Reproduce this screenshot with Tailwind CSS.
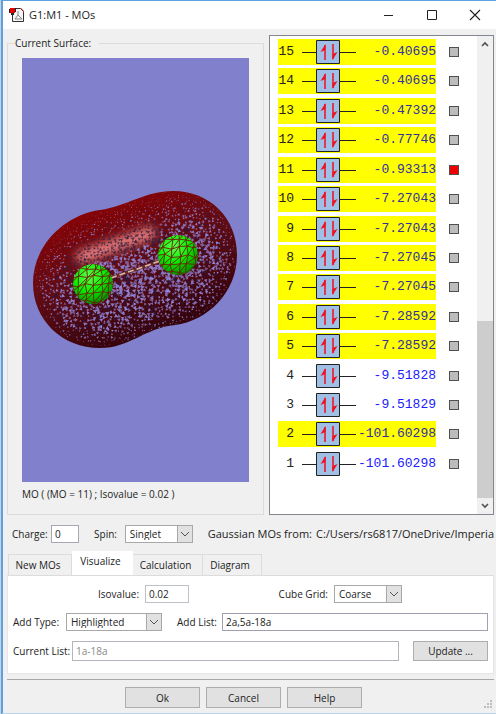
<!DOCTYPE html>
<html lang="en">
<head>
    <meta charset="UTF-8">
    <meta name="viewport" content="width=device-width, initial-scale=1.0">
    <title>G1:M1 - MOs</title>
    <script src="https://cdn.jsdelivr.net/npm/@tailwindcss/browser@4"></script>
</head>
<body class="min-h-screen bg-[#c9d3de] pl-[1px] font-['Open_Sans',sans-serif] text-[10px] leading-4 text-[#222]">
    <div class="flex min-h-screen flex-col border-t border-b border-l-2 border-t-[#5ba3e0] border-b-[#b5d3ea] border-l-[#5ba3e0] bg-[#f0f0f0]">
        <header class="flex h-7 shrink-0 items-center bg-white pl-[6px]">
            <svg class="h-4 w-4" viewBox="0 0 16 16">
                <path d="M3.5 1.5h8l3 3v10h-11z" fill="#f4f4f4" stroke="#333"/>
                <path d="M11 1h1l3 3v1z" fill="#c22"/>
                <path d="M9 4v4l-3 4M9 8l4 4M6 12h7" stroke="#888" fill="none"/>
                <path d="M0 2h2v4H0zM2 6h3v2H2zM6 1h1v4H6z" fill="#222"/>
                <path d="M1 1h5v5H1z" fill="#e00000"/>
            </svg>
            <h1 class="ml-1 grow text-[11px]">G1:M1 - MOs</h1>
            <button aria-label="Minimize" class="flex h-7 w-[43px] items-center justify-center"><svg class="h-3 w-3" viewBox="0 0 12 12"><path d="M1 6.5h9" stroke="#222"/></svg></button>
            <button aria-label="Maximize" class="flex h-7 w-[43px] items-center justify-center"><svg class="h-3 w-3" viewBox="0 0 12 12"><path d="M1.5 1.5h9v9h-9z" fill="none" stroke="#222"/></svg></button>
            <button aria-label="Close" class="flex h-7 w-[43px] items-center justify-center"><svg class="h-3 w-3" viewBox="0 0 12 12"><path d="M1 1l10 10M11 1L1 11" stroke="#222" stroke-width="1.1"/></svg></button>
        </header>

        <main class="flex grow flex-col pt-[6px] pr-[2px] pl-1">
            <div class="flex gap-[5px]">
                <fieldset class="min-w-0 grow border border-[#dcdcdc] px-[14px] pb-3">
                    <legend class="-ml-[7px] pr-2">Current Surface:</legend>
                    <svg id="surface" class="mt-[7px] h-[424px] w-full bg-[#8080cc]" viewBox="22 58 227 424">
                        <defs>
                            <linearGradient id="body" x1="0.25" y1="0.1" x2="0.7" y2="0.95">
                                <stop offset="0" stop-color="#900000"/>
                                <stop offset="0.4" stop-color="#640c14"/>
                                <stop offset="1" stop-color="#260008"/>
                            </linearGradient>
                            <radialGradient id="atom" cx="0.4" cy="0.3" r="0.75">
                                <stop offset="0" stop-color="#60ff50"/>
                                <stop offset="0.5" stop-color="#08f000"/>
                                <stop offset="1" stop-color="#008400"/>
                            </radialGradient>
                            <filter id="soft" x="-20%" y="-60%" width="140%" height="220%"><feGaussianBlur stdDeviation="5"/></filter>
                            <clipPath id="hull"><path d="M33 283C33 246 64 215 100 210C128 206 145 191 173 191C210 191 237 218 237 255C237 293 207 321 175 325C145 328 130 348 100 348C62 348 33 320 33 283Z"/></clipPath>
                            <clipPath id="atoms"><circle cx="93" cy="284" r="20"/><circle cx="178" cy="255" r="20"/></clipPath>
                        </defs>
                        <g clip-path="url(#hull)">
                            <path d="M22 180h227v180H22z" fill="url(#body)"/>
                            <path d="M82 257L150 233" stroke="#ff9494" stroke-width="13" stroke-linecap="round" opacity="0.85" filter="url(#soft)"/>
                            <g id="holes"></g>
                        </g>
                        <path d="M111 278L160 261" stroke="#6a2828" stroke-width="3"/>
                        <path d="M111 278L160 261" stroke="#d8b8a8" stroke-width="1.6" stroke-dasharray="6 3"/>
                        <g clip-path="url(#atoms)">
                            <circle cx="93" cy="284" r="20" fill="url(#atom)"/>
                            <circle cx="178" cy="255" r="20" fill="url(#atom)"/>
                            <g id="mesh" fill="none" stroke="#6a2000" stroke-width="0.9"></g>
                        </g>
                    </svg>
                    <p class="mt-1">MO ( (MO = 11) ; Isovalue = 0.02 )</p>
                </fieldset>

                <section class="flex w-[225px] shrink-0 border border-[#828790] bg-white">
                    <ul id="orbitals" class="flex grow flex-col justify-between pt-[3px] pb-[37px] pl-2 font-['Liberation_Mono',monospace] text-[13px]"></ul>
                    <div class="flex w-4 flex-col bg-[#f0f0f0]">
                        <button aria-label="Scroll up" class="flex h-4 items-center justify-center"><svg class="h-2 w-2" viewBox="0 0 8 8"><path d="M1 6l3-3 3 3" fill="none" stroke="#505050" stroke-width="1.6"/></svg></button>
                        <div class="grow"></div>
                        <div class="h-[177px] bg-[#cdcdcd]"></div>
                        <button aria-label="Scroll down" class="flex h-4 items-center justify-center"><svg class="h-2 w-2" viewBox="0 0 8 8"><path d="M1 2l3 3 3-3" fill="none" stroke="#505050" stroke-width="1.6"/></svg></button>
                    </div>
                </section>
            </div>

            <div class="mt-[10px] flex items-center overflow-hidden pl-[5px] whitespace-nowrap">
                <label for="charge" class="w-[41px]">Charge:</label>
                <input id="charge" value="0" class="h-[18px] w-7 border border-[#a8a8b4] bg-white px-[3px]">
                <label for="spin" class="ml-[15px] w-7">Spin:</label>
                <div class="relative ml-1">
                    <select id="spin" class="block h-[18px] w-[68px] appearance-none border border-[#a8a8a8] bg-white pb-[2px] pl-1"><option>Singlet</option></select>
                    <span class="pointer-events-none absolute top-0 right-0 flex h-[18px] w-4 items-center justify-center border border-[#a8a8a8] bg-[#e1e1e1]"><svg class="h-2 w-2" viewBox="0 0 8 8"><path d="M0 2l4 4 4-4" fill="none" stroke="#555"/></svg></span>
                </div>
                <span class="ml-[15px] text-[11px]">Gaussian MOs from:</span>
                <span class="ml-1 text-[11px]">C:/Users/rs6817/OneDrive/Imperia</span>
            </div>

            <div role="tablist" class="mt-2 flex h-6 items-end">
                <button role="tab" class="ml-[1px] h-[21px] w-16 border border-b-0 border-[#dcdcdc] pr-1 text-center">New MOs</button>
                <button role="tab" aria-selected="true" class="h-6 w-[61px] bg-white pr-1 pb-1 text-center">Visualize</button>
                <button role="tab" class="h-[21px] w-[70px] border border-b-0 border-l-0 border-[#dcdcdc] pr-1 text-center">Calculation</button>
                <button role="tab" class="h-[21px] w-[59px] border border-b-0 border-l-0 border-[#dcdcdc] pr-1 text-center">Diagram</button>
            </div>
            <div role="tabpanel" class="flex flex-col gap-[10px] border border-t-[#dcdcdc] border-[#e6e6e6] bg-white px-[5px] pt-[9px] pb-3">
                <div class="flex items-center pl-[85px]">
                    <label for="isovalue" class="w-[47px]">Isovalue:</label>
                    <input id="isovalue" value="0.02" class="h-[18px] w-11 border border-[#c0c0c8] bg-white px-[3px]">
                    <label for="grid" class="ml-auto">Cube Grid:</label>
                    <div class="relative mr-[86px] ml-[6px]">
                        <select id="grid" class="block h-[18px] w-[68px] appearance-none border border-[#a8a8a8] bg-white pb-[2px] pl-1"><option>Coarse</option></select>
                        <span class="pointer-events-none absolute top-0 right-0 flex h-[18px] w-4 items-center justify-center border border-[#a8a8a8] bg-[#e1e1e1]"><svg class="h-2 w-2" viewBox="0 0 8 8"><path d="M0 2l4 4 4-4" fill="none" stroke="#555"/></svg></span>
                    </div>
                </div>
                <div class="flex items-center">
                    <label for="type" class="w-[53px]">Add Type:</label>
                    <div class="relative">
                        <select id="type" class="block h-[18px] w-24 appearance-none border border-[#a8a8a8] bg-white pb-[2px] pl-1"><option>Highlighted</option></select>
                        <span class="pointer-events-none absolute top-0 right-0 flex h-[18px] w-4 items-center justify-center border border-[#a8a8a8] bg-[#e1e1e1]"><svg class="h-2 w-2" viewBox="0 0 8 8"><path d="M0 2l4 4 4-4" fill="none" stroke="#555"/></svg></span>
                    </div>
                    <label for="add" class="ml-[15px] w-[45px]">Add List:</label>
                    <input id="add" value="2a,5a-18a" class="h-[18px] min-w-0 grow border border-[#a0a0b0] bg-white px-[3px]">
                </div>
                <div class="flex items-center">
                    <label for="current" class="w-[59px]">Current List:</label>
                    <input id="current" value="1a-18a" disabled class="h-5 min-w-0 grow border border-[#b4b4bc] bg-white px-[3px] text-[#8a8a8a]">
                    <button class="ml-[14px] h-5 w-[75px] border border-[#adadad] bg-[#e1e1e1]">Update ...</button>
                </div>
            </div>

            <hr class="mt-[5px] border-[#a8a8a8]">
            <div class="mt-[7px] flex justify-center gap-[6px] pr-[14px]">
                <button class="h-[21px] w-[75px] border border-[#adadad] bg-[#e1e1e1]">Ok</button>
                <button class="h-[21px] w-[75px] border border-[#adadad] bg-[#e1e1e1]">Cancel</button>
                <button class="h-[21px] w-[75px] border border-[#adadad] bg-[#e1e1e1]">Help</button>
            </div>
            <svg class="-mt-2 mr-[2px] h-2 w-2 self-end" viewBox="0 0 8 8"><path d="M6 0h2v2H6zM3 3h2v2H3zM6 3h2v2H6zM0 6h2v2H0zM3 6h2v2H3zM6 6h2v2H6z" fill="#bdbdbd"/></svg>
        </main>
    </div>

    <script>
        // molecular orbitals, highest first: number, energy, highlighted
        const orbitals = [
            [15, '-0.40695', true], [14, '-0.40695', true], [13, '-0.47392', true],
            [12, '-0.77746', true], [11, '-0.93313', true], [10, '-7.27043', true],
            [9, '-7.27043', true], [8, '-7.27045', true], [7, '-7.27045', true],
            [6, '-7.28592', true], [5, '-7.28592', true], [4, '-9.51828', false],
            [3, '-9.51829', false], [2, '-101.60298', true], [1, '-101.60298', false],
        ];

        document.getElementById('orbitals').innerHTML = orbitals.map(([n, energy, lit]) => `
            <li class="flex items-center">
                <label for="mo${n}" class="flex h-[26px] w-[158px] items-center ${lit ? 'bg-[#ffff00] text-[#3030a0]' : 'text-[#2020ff]'}">
                    <span class="w-4 text-right text-[#222]">${n}</span>
                    <svg class="ml-2 h-6 w-[54px] shrink-0" viewBox="0 0 54 24">
                        <path d="M0 12.5h54" stroke="#222"/>
                        <path d="M14.5 0.5h23v23h-23z" fill="#9fbfe6" stroke="#222"/>
                        <path d="M23 20V5M31 4v15" stroke="#f01020" stroke-width="1.5"/>
                        <path d="M23.500 4v6l-5 2zM30.500 20v-6l5-2z" fill="#f01020"/>
                    </svg>
                    <span class="-ml-2 grow text-right">${energy}</span>
                </label>
                <input id="mo${n}" type="checkbox" ${n === 11 ? 'checked' : ''} class="ml-[13px] h-[10px] w-[10px] appearance-none border border-[#505050] bg-[#bcbcbc] checked:bg-[#f00000]">
            </li>`).join('');

        // small fixed-seed generator so the mesh is stable between loads
        let seed = 11;
        function rnd() {
            seed = (seed * 16807) % 2147483647;
            return seed / 2147483647;
        }

        // gaps of the wire mesh, seen as small triangles that thin out at the rim
        const holes = [];
        for (let y = 190; y < 350; y += 3.4) {
            for (let x = 32; x < 240; x += 3.4) {
                const px = x + rnd() * 2.4, py = y + rnd() * 2.4;
                const t = Math.max(0, Math.min(1, ((px - 101) * 68 - (py - 279) * 23) / 5153));
                const dx = (px - 101 - 68 * t) / 68, dy = (py - 279 + 23 * t) / 68;
                const r = Math.hypot(dx, dy);
                if (r > 0.98) continue;
                const light = -dx * 0.5 - dy * 0.8;
                const size = (1.5 + rnd() * 1.6) * Math.pow(1 - r * r, 0.4) * (1 - Math.max(0, light) * 0.7);
                const a = rnd() * 6.3;
                const pts = [0, 2.1, 4.2].map(k => (px + Math.cos(a + k) * size).toFixed(1) + ',' + (py + Math.sin(a + k) * size).toFixed(1));
                const shine = Math.abs((py - 257) + (px - 76) * 0.33) < 12 && px > 66 && px < 160;
                const fill = shine ? '#352040' : rnd() < 0.2 ? '#30183c' : '#9088dc';
                holes.push(`<polygon points="${pts.join(' ')}" fill="${fill}" opacity="${(0.6 + rnd() * 0.4).toFixed(2)}"/>`);
            }
        }
        document.getElementById('holes').innerHTML = holes.join('');

        // triangulated wires over both atoms
        let wires = '';
        for (const [cx, cy] of [[93, 284], [178, 255]]) {
            const grid = [];
            for (let i = 0; i < 7; i++) {
                grid.push([]);
                for (let j = 0; j < 7; j++) {
                    grid[i].push([(cx - 25 + j * 8 + rnd() * 4).toFixed(1), (cy - 25 + i * 8 + rnd() * 4).toFixed(1)]);
                }
            }
            for (let i = 0; i < 6; i++) {
                for (let j = 0; j < 6; j++) {
                    wires += `M${grid[i][j]}L${grid[i][j + 1]}L${grid[i + 1][j]}Z`;
                }
            }
        }
        document.getElementById('mesh').innerHTML = `<path d="${wires}"/>`;
    </script>
</body>
</html>
